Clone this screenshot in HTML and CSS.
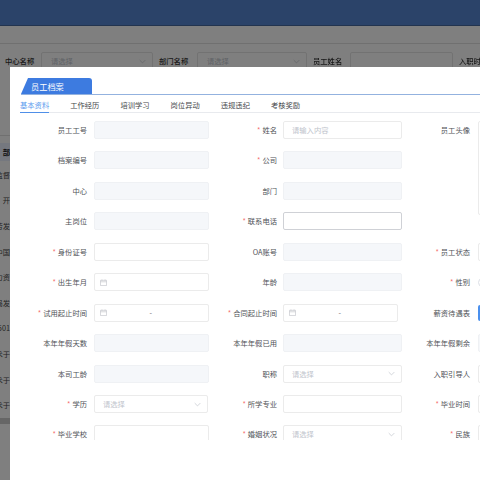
FILE: index.html
```
<!DOCTYPE html>
<html lang="zh-CN">
<head>
<meta charset="utf-8">
<title>员工档案</title>
<link rel="stylesheet" href="styles.css">
</head>
<body>
<div class="page">
<div class="canvas">
  <header class="topbar"></header>
  <div class="crumbs"></div>
  <div class="filters">
    <span class="f-label w1">中心名称</span><span class="f-ctl w2">请选择<svg class="chev" viewBox="0 0 10 6"><path d="M1 1l4 4 4-4"/></svg></span>
    <span class="f-label w3">部门名称</span><span class="f-ctl w4">请选择<svg class="chev" viewBox="0 0 10 6"><path d="M1 1l4 4 4-4"/></svg></span>
    <span class="f-label w5">员工姓名</span><span class="f-ctl w6"></span>
    <span class="f-label w7">入职时间</span>
  </div>
  <div class="list">
    <div class="row head"><span>部</span></div>
    <div class="row"><span>监督</span></div>
    <div class="row"><span>开</span></div>
    <div class="row"><span>劳发</span></div>
    <div class="row"><span>中国</span></div>
    <div class="row"><span>力资</span></div>
    <div class="row"><span>局发</span></div>
    <div class="row"><span>501</span></div>
    <div class="row"><span>术于</span></div>
    <div class="row"><span>术于</span></div>
    <div class="row"><span>术于</span></div>
    <div class="scroll"></div>
  </div>
  <div class="mask"></div>
  <section class="modal">
    <div class="title-bar"><h1 class="title-tab">员工档案</h1></div>
    <nav class="tabs">
      <a class="tab on">基本资料</a><a class="tab">工作经历</a><a class="tab">培训学习</a><a class="tab">岗位异动</a><a class="tab">违规违纪</a><a class="tab">考核奖励</a>
    </nav>
    <form class="form">
      <div class="field"><label>员工工号</label><div class="ctl off"></div></div>
      <div class="field"><label class="req">姓名</label><div class="ctl ph">请输入内容</div></div>
      <div class="field"><label>员工头像</label><div class="ctl upload"></div></div>

      <div class="field"><label>档案编号</label><div class="ctl off"></div></div>
      <div class="field"><label class="req">公司</label><div class="ctl off"></div></div>
      <div class="field"></div>

      <div class="field"><label>中心</label><div class="ctl off"></div></div>
      <div class="field"><label>部门</label><div class="ctl off"></div></div>
      <div class="field"></div>

      <div class="field"><label>主岗位</label><div class="ctl off"></div></div>
      <div class="field"><label class="req">联系电话</label><div class="ctl focus"></div></div>
      <div class="field"></div>

      <div class="field"><label class="req">身份证号</label><div class="ctl"></div></div>
      <div class="field"><label>OA账号</label><div class="ctl off"></div></div>
      <div class="field"><label class="req">员工状态</label><div class="ctl"></div></div>

      <div class="field"><label class="req">出生年月</label><div class="ctl date"><svg class="cal" viewBox="0 0 8 8"><path d="M.5 1.5h7v6h-7zM.5 3.2h7M2.2.5v1.4M5.8.5v1.4"/></svg></div></div>
      <div class="field"><label>年龄</label><div class="ctl off"></div></div>
      <div class="field"><label class="req">性别</label><span class="radio"></span></div>

      <div class="field"><label class="req">试用起止时间</label><div class="ctl date"><svg class="cal" viewBox="0 0 8 8"><path d="M.5 1.5h7v6h-7zM.5 3.2h7M2.2.5v1.4M5.8.5v1.4"/></svg><span class="dash">-</span></div></div>
      <div class="field"><label class="req">合同起止时间</label><div class="ctl date narrow"><svg class="cal" viewBox="0 0 8 8"><path d="M.5 1.5h7v6h-7zM.5 3.2h7M2.2.5v1.4M5.8.5v1.4"/></svg><span class="dash">-</span></div></div>
      <div class="field"><label>薪资待遇表</label><div class="btn"></div></div>

      <div class="field"><label>本年年假天数</label><div class="ctl off"></div></div>
      <div class="field"><label>本年年假已用</label><div class="ctl off"></div></div>
      <div class="field"><label>本年年假剩余</label><div class="ctl off"></div></div>

      <div class="field"><label>本司工龄</label><div class="ctl off"></div></div>
      <div class="field"><label>职称</label><div class="ctl sel">请选择<svg class="chev" viewBox="0 0 10 6"><path d="M1 1l4 4 4-4"/></svg></div></div>
      <div class="field"><label>入职引导人</label><div class="ctl"></div></div>

      <div class="field"><label class="req">学历</label><div class="ctl sel slim">请选择<svg class="chev" viewBox="0 0 10 6"><path d="M1 1l4 4 4-4"/></svg></div></div>
      <div class="field"><label class="req">所学专业</label><div class="ctl"></div></div>
      <div class="field"><label class="req">毕业时间</label><div class="ctl"></div></div>

      <div class="field"><label class="req">毕业学校</label><div class="ctl"></div></div>
      <div class="field"><label class="req">婚姻状况</label><div class="ctl sel">请选择<svg class="chev" viewBox="0 0 10 6"><path d="M1 1l4 4 4-4"/></svg></div></div>
      <div class="field"><label class="req">民族</label><div class="ctl"></div></div>
    </form>
  </section>
</div>
</div>
</body>
</html>
```
FILE: styles.css
```
* { box-sizing: border-box; }
html, body { margin: 0; padding: 0; }
body { width: 480px; height: 480px; overflow: hidden; font-family: "Noto Sans CJK SC", "Liberation Sans", sans-serif; }
.page { width: 480px; height: 480px; overflow: hidden; background: #fff; }
.canvas { position: relative; margin: -6px; width: 492px; height: 492px; padding: 6px; background: #fff; filter: blur(0.45px); }

.topbar { height: 32px; margin: -6px -6px 0; background: #5686d2; border-bottom: 1px solid #46699f; }
.crumbs { height: 18px; background: #fff; border-bottom: 1px solid #e0e0e0; }
.filters { height: 34px; display: flex; align-items: center; font-size: 7.3px; color: #333; background: #fff; }
.f-label { flex: none; font-weight: 500; text-align: left; white-space: nowrap; }
.f-ctl { flex: none; height: 18px; border: 1px solid #e4e4e4; border-radius: 2px; display: flex; align-items: center; padding-left: 9px; color: #c0c4cc; }
.w1 { margin-left: 5px; width: 36px; }
.w2 { width: 112px; }
.w3 { margin-left: 6px; width: 32px; }
.w4 { margin-left: 6px; width: 110px; }
.w5 { margin-left: 6px; width: 37px; }
.w6 { width: 103px; }
.w7 { margin-left: 6px; width: 40px; }

.list { margin-top: 57px; padding-top: 7px; height: 345px; border-top: 1px solid #e0e0e0; }
.row { width: 10px; height: 25.6px; overflow: hidden; display: flex; justify-content: flex-end; align-items: center; font-size: 7.3px; color: #4a4a4a; white-space: nowrap; }
.row span { flex: none; }
.row.head { height: 18px; margin-bottom: 1px; background: #eaf0fe; font-weight: 700; color: #222; }
.scroll { width: 10px; height: 6px; background: #ccc; }

.mask { position: absolute; inset: 0; background: rgba(0, 0, 0, .5); }
.modal { position: absolute; left: 16px; top: 73px; width: 600px; height: 430px; background: #fff; }

.title-bar { height: 28px; margin-left: 11px; padding-top: 11px; border-bottom: 1px solid #93b2df; }
.title-tab { margin: 0; width: 71px; height: 16px; padding-left: 10px; font-size: 8.2px; line-height: 16px; font-weight: 400; color: #fff; background: #3d7be0; clip-path: polygon(7px 0, 100% 0, 100% 100%, 0 100%); border-radius: 0 3px 0 0; }

.tabs { height: 18px; margin-left: 10px; display: flex; gap: 21px; border-bottom: 1px solid #e8eaee; font-size: 7.3px; line-height: 21px; color: #45474b; }
.tab { display: block; width: 29.2px; height: 18px; white-space: nowrap; }
.tab.on { color: #5c9bee; border-bottom: 1px solid #4f8fe8; }

.form { margin-top: 7.8px; height: 319px; overflow: hidden; display: grid; grid-template-columns: 199px 193px 200px; grid-auto-rows: 18px; row-gap: 12.47px; font-size: 7.3px; color: #4f5257; }
.field { display: flex; align-items: center; min-width: 0; }
.field label { flex: none; text-align: right; white-space: nowrap; }
.field:nth-child(3n+1) label { width: 77px; margin-right: 7px; }
.field:nth-child(3n+2) label { width: 68px; margin-right: 6px; }
.field:nth-child(3n) label { width: 68px; margin-right: 8px; }
.req::before { content: "*"; color: #f56c6c; margin-right: 2px; }

.ctl { position: relative; flex: none; height: 18px; width: 115px; background: #fff; border: 1px solid #ebebeb; border-radius: 2px; display: flex; align-items: center; }
.field:nth-child(3n+2) .ctl { width: 119px; }
.field:nth-child(3n+2) .ctl.narrow { width: 115px; }
.ctl.off { background: #f5f7fa; border-color: #eff1f4; }
.ctl.focus { border-color: #cfd1d6; }
.ctl.ph, .ctl.sel { padding-left: 8px; color: #c0c4cc; }
.ctl.slim { width: 113.5px; }
.ctl.date { padding-left: 5px; }
.ctl.upload { height: 94px; align-self: flex-start; }
.cal { width: 7px; height: 7px; fill: none; stroke: #c4c6cb; stroke-width: .8; }
.chev { flex: none; width: 7px; height: 5px; margin-left: auto; margin-right: 6px; fill: none; stroke: #c0c4cc; stroke-width: 1; }
.dash { position: absolute; left: 54.5px; top: 3px; color: #666; }
.radio { flex: none; width: 9px; height: 9px; border: 1px solid #dcdfe6; border-radius: 50%; }
.btn { flex: none; width: 30px; height: 16px; background: #4a90ee; border-radius: 2px; }
```
